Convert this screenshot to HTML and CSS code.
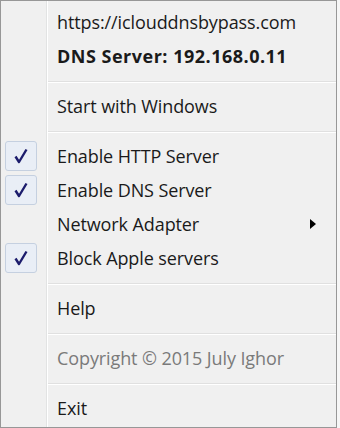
FILE: index.html
```html
<!DOCTYPE html>
<html lang="en">

<head>
  <meta charset="UTF-8">
  <meta name="viewport" content="width=device-width, initial-scale=1.0">
  <title>iCloud DNS Bypass</title>
  <link rel="stylesheet" href="styles.css">
</head>

<body>
  <div class="menu">
    <div class="item">
      <span class="gutter"></span>
      <span class="label">https://iclouddnsbypass.com</span>
    </div>
    <div class="item">
      <span class="gutter"></span>
      <span class="label bold">DNS Server: 192.168.0.11</span>
    </div>
    <div class="sep"></div>
    <div class="item">
      <span class="gutter"></span>
      <span class="label">Start with Windows</span>
    </div>
    <div class="sep"></div>
    <div class="item">
      <span class="gutter"><span class="check">
        <svg width="14" height="16" viewBox="0 0 14 16"><path d="M1.5 8.5 L5 14 L12.5 1.5" fill="none" stroke="#1c1c6c" stroke-width="2.4" stroke-linejoin="round" /></svg>
      </span></span>
      <span class="label">Enable HTTP Server</span>
    </div>
    <div class="item">
      <span class="gutter"><span class="check">
        <svg width="14" height="16" viewBox="0 0 14 16"><path d="M1.5 8.5 L5 14 L12.5 1.5" fill="none" stroke="#1c1c6c" stroke-width="2.4" stroke-linejoin="round" /></svg>
      </span></span>
      <span class="label">Enable DNS Server</span>
    </div>
    <div class="item">
      <span class="gutter"></span>
      <span class="label">Network Adapter</span>
      <span class="arrow"></span>
    </div>
    <div class="item">
      <span class="gutter"><span class="check">
        <svg width="14" height="16" viewBox="0 0 14 16"><path d="M1.5 8.5 L5 14 L12.5 1.5" fill="none" stroke="#1c1c6c" stroke-width="2.4" stroke-linejoin="round" /></svg>
      </span></span>
      <span class="label">Block Apple servers</span>
    </div>
    <div class="sep"></div>
    <div class="item">
      <span class="gutter"></span>
      <span class="label">Help</span>
    </div>
    <div class="sep"></div>
    <div class="item">
      <span class="gutter"></span>
      <span class="label disabled">Copyright © 2015 July Ighor</span>
    </div>
    <div class="sep"></div>
    <div class="item">
      <span class="gutter"></span>
      <span class="label">Exit</span>
    </div>
  </div>
</body>

</html>
```

FILE: styles.css
```css
:root {
  --menu-bg: #f0f0f0;
  --border-color: #979797;
  --text-color: #1a1a1a;
  --disabled-color: #7a7a7a;
}

body {
  margin: 0;
  background: #f6f6f6;
  font-family: "Open Sans", "Noto Sans", sans-serif;
}

.menu {
  width: 337px;
  height: 428px;
  box-sizing: border-box;
  border: 1px solid var(--border-color);
  padding: 4px 0 2px;
  background:
    linear-gradient(to right, transparent 45px, #e2e3e3 45px, #e2e3e3 46px, #ffffff 46px, #ffffff 47px, transparent 47px),
    var(--menu-bg);
}

.item {
  height: 34px;
  display: flex;
  align-items: center;
  color: var(--text-color);
  font-size: 18px;
}

.gutter {
  width: 47px;
  height: 100%;
  flex-shrink: 0;
  display: flex;
  align-items: center;
  padding-left: 4px;
  box-sizing: border-box;
}

.check {
  width: 32px;
  height: 30px;
  box-sizing: border-box;
  border: 1px solid #c5d0e0;
  border-radius: 3px;
  background: #e9eef6;
  display: flex;
  align-items: center;
  justify-content: center;
}

.label {
  padding-left: 9px;
  white-space: nowrap;
  letter-spacing: -0.1px;
}

.bold {
  font-weight: bold;
  letter-spacing: 0.5px;
}

.disabled {
  color: var(--disabled-color);
}

.arrow {
  margin-left: auto;
  margin-right: 20px;
  width: 0;
  height: 0;
  border-top: 5px solid transparent;
  border-bottom: 5px solid transparent;
  border-left: 6px solid #000;
}

.sep {
  height: 16px;
  margin-left: 47px;
  display: flex;
  flex-direction: column;
  justify-content: center;
}

.sep::before {
  content: "";
  display: block;
  height: 1px;
  margin-top: 2px;
  background: #e0e0e0;
  border-bottom: 1px solid #ffffff;
}
```
